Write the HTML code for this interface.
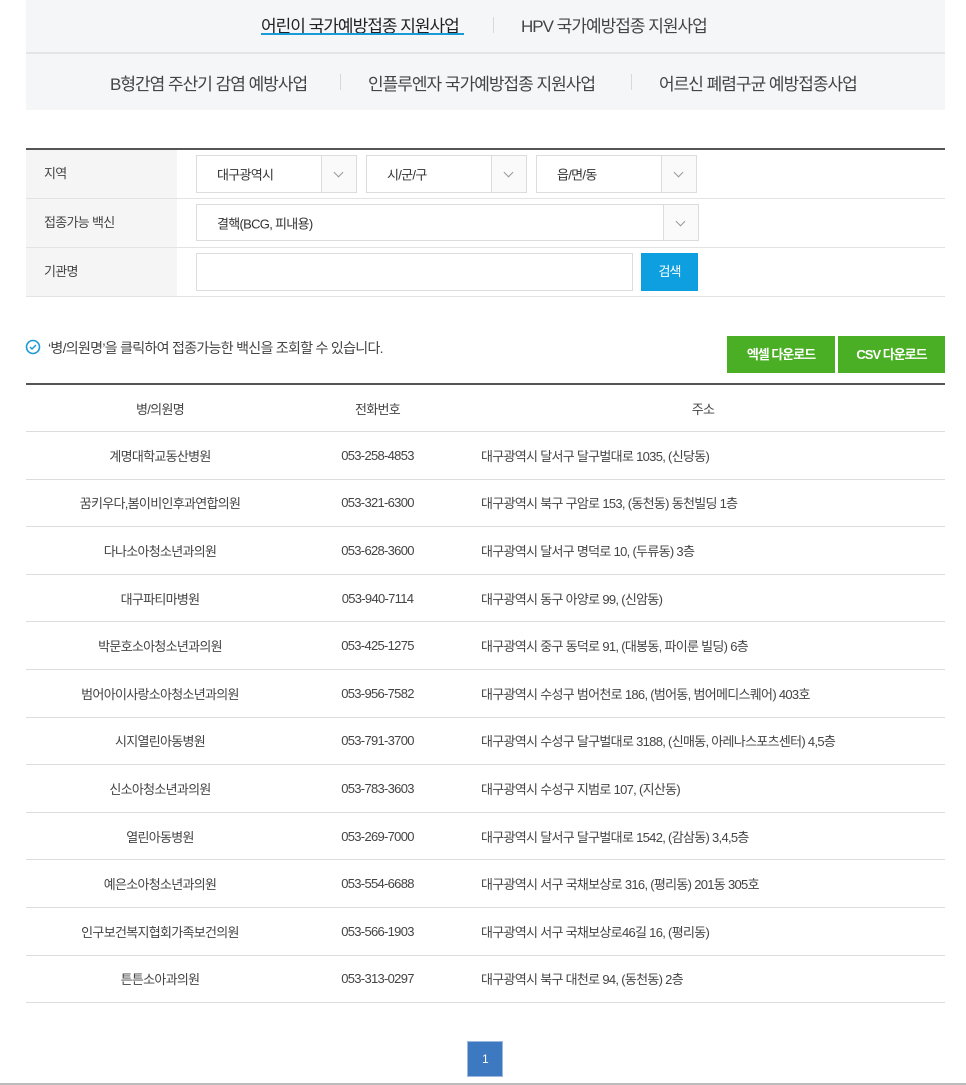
<!DOCTYPE html>
<html><head><meta charset="utf-8"><style>
*{margin:0;padding:0;box-sizing:border-box}
body{width:966px;height:1085px;background:#fff;font-family:"Liberation Sans","Noto Sans CJK KR",sans-serif;color:#333;position:relative;overflow:hidden;letter-spacing:-0.7px}
.abs{position:absolute}
.nav{left:26px;top:0;width:919px;height:110px;background:#f5f6f8}
.nav .div{position:absolute;left:0;top:52px;width:919px;height:2px;background:#e3e5e8}
.nt{position:absolute;font-size:17px;color:#444;white-space:nowrap;letter-spacing:-1px}
.sep{position:absolute;width:1px;height:16px;background:#d6d8db}
.lab{position:absolute;left:26px;width:151px;background:#f5f5f5;font-size:13px;color:#444;padding-left:18px}
.row{position:absolute;left:26px;width:919px;height:1px;background:#e3e3e3}
.sel{position:absolute;border:1px solid #dcdcdc;background:#fff;font-size:13px;color:#333}
.sel span{position:absolute;left:20px;top:50%;transform:translateY(-50%)}
.sel i{position:absolute;right:0;top:0;bottom:0;width:35px;border-left:1px solid #dcdcdc;background:#fafafa}
.sel i:after{content:"";position:absolute;left:13px;top:13px;width:6px;height:6px;border-right:1px solid #999;border-bottom:1px solid #999;transform:rotate(45deg)}
.btn{position:absolute;color:#fff;font-size:13px;text-align:center;font-weight:bold;letter-spacing:-1px}
table{position:absolute;left:26px;top:383px;width:919px;border-collapse:collapse;border-top:2px solid #555;font-size:13px;color:#444}
td,th{height:47.6px;border-bottom:1px solid #ddd;font-weight:normal}
th{color:#444}
td:nth-child(1),th:nth-child(1){width:268px;text-align:center}
td:nth-child(2),th:nth-child(2){width:167px;text-align:center}
td:nth-child(3){padding-left:20px}
</style></head><body>
<div class="abs nav"><div class="div"></div>
<div class="nt" style="left:235px;top:12px;color:#222">어린이 국가예방접종 지원사업</div>
<div class="abs" style="left:235px;top:33px;width:203px;height:2px;background:#1a9ad6"></div>
<div class="sep" style="left:467px;top:17px"></div>
<div class="nt" style="left:495px;top:12px">HPV 국가예방접종 지원사업</div>
<div class="nt" style="left:84px;top:70px">B형간염 주산기 감염 예방사업</div>
<div class="sep" style="left:314px;top:74px"></div>
<div class="nt" style="left:342px;top:70px">인플루엔자 국가예방접종 지원사업</div>
<div class="sep" style="left:605px;top:74px"></div>
<div class="nt" style="left:633px;top:70px">어르신 폐렴구균 예방접종사업</div>
</div>
<div class="abs" style="left:26px;top:148px;width:919px;height:2px;background:#555"></div>
<div class="lab" style="top:150px;height:48px;line-height:48px">지역</div>
<div class="lab" style="top:199px;height:48px;line-height:48px">접종가능 백신</div>
<div class="lab" style="top:248px;height:48px;line-height:48px">기관명</div>
<div class="row" style="top:198px"></div><div class="row" style="top:247px"></div><div class="row" style="top:296px"></div>
<div class="sel" style="left:196px;top:155px;width:161px;height:38px"><span>대구광역시</span><i></i></div>
<div class="sel" style="left:366px;top:155px;width:161px;height:38px"><span>시/군/구</span><i></i></div>
<div class="sel" style="left:536px;top:155px;width:161px;height:38px"><span>읍/면/동</span><i></i></div>
<div class="sel" style="left:196px;top:204px;width:503px;height:37px"><span>결핵(BCG, 피내용)</span><i></i></div>
<div class="sel" style="left:196px;top:253px;width:437px;height:38px"></div>
<div class="btn" style="left:641px;top:253px;width:57px;height:38px;line-height:38px;background:#0e9fe0;font-weight:normal">검색</div>
<svg class="abs" style="left:25px;top:339px" width="16" height="16" viewBox="0 0 16 16"><circle cx="8" cy="8" r="6.5" fill="none" stroke="#1a9ad6" stroke-width="1.6"/><path d="M5 8l2 2 4-4" fill="none" stroke="#1a9ad6" stroke-width="1.5"/></svg>
<div class="abs" style="left:48px;top:338px;font-size:14px;color:#444">‘병/의원명’을 클릭하여 접종가능한 백신을 조회할 수 있습니다.</div>
<div class="btn" style="left:727px;top:336px;width:108px;height:37px;line-height:37px;background:#4aaf25">엑셀 다운로드</div>
<div class="btn" style="left:838px;top:336px;width:107px;height:37px;line-height:37px;background:#4aaf25">CSV 다운로드</div>
<table>
<tr><th>병/의원명</th><th>전화번호</th><th>주소</th></tr>
<tr><td>계명대학교동산병원</td><td>053-258-4853</td><td>대구광역시 달서구 달구벌대로 1035, (신당동)</td></tr>
<tr><td>꿈키우다,봄이비인후과연합의원</td><td>053-321-6300</td><td>대구광역시 북구 구암로 153, (동천동) 동천빌딩 1층</td></tr>
<tr><td>다나소아청소년과의원</td><td>053-628-3600</td><td>대구광역시 달서구 명덕로 10, (두류동) 3층</td></tr>
<tr><td>대구파티마병원</td><td>053-940-7114</td><td>대구광역시 동구 아양로 99, (신암동)</td></tr>
<tr><td>박문호소아청소년과의원</td><td>053-425-1275</td><td>대구광역시 중구 동덕로 91, (대봉동, 파이룬 빌딩) 6층</td></tr>
<tr><td>범어아이사랑소아청소년과의원</td><td>053-956-7582</td><td>대구광역시 수성구 범어천로 186, (범어동, 범어메디스퀘어) 403호</td></tr>
<tr><td>시지열린아동병원</td><td>053-791-3700</td><td>대구광역시 수성구 달구벌대로 3188, (신매동, 아레나스포츠센터) 4,5층</td></tr>
<tr><td>신소아청소년과의원</td><td>053-783-3603</td><td>대구광역시 수성구 지범로 107, (지산동)</td></tr>
<tr><td>열린아동병원</td><td>053-269-7000</td><td>대구광역시 달서구 달구벌대로 1542, (감삼동) 3,4,5층</td></tr>
<tr><td>예은소아청소년과의원</td><td>053-554-6688</td><td>대구광역시 서구 국채보상로 316, (평리동) 201동 305호</td></tr>
<tr><td>인구보건복지협회가족보건의원</td><td>053-566-1903</td><td>대구광역시 서구 국채보상로46길 16, (평리동)</td></tr>
<tr><td>튼튼소아과의원</td><td>053-313-0297</td><td>대구광역시 북구 대천로 94, (동천동) 2층</td></tr>
</table>
<div class="abs" style="left:467px;top:1041px;width:36px;height:36px;background:#3d79c1;border:1px solid #9db8de;color:#fff;font-size:12px;text-align:center;line-height:34px">1</div>
<div class="abs" style="left:0;top:1083px;width:966px;height:2px;background:#bbb"></div>
</body></html>
